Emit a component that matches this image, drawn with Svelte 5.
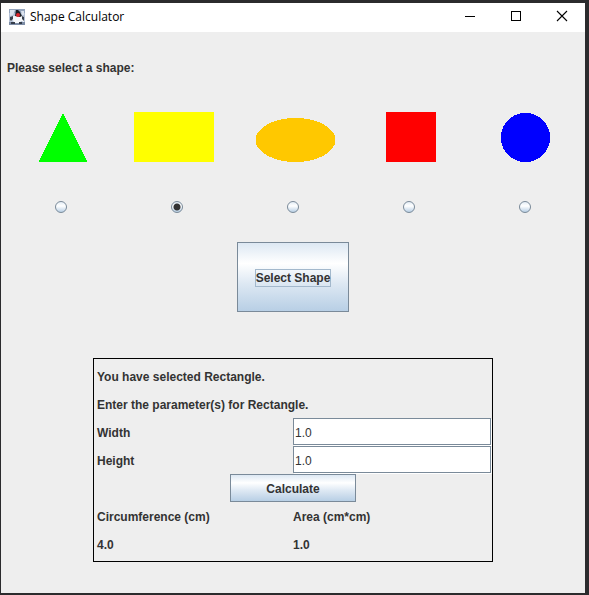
<script>
  const shapes = ['Triangle', 'Rectangle', 'Ellipse', 'Square', 'Circle'];
  let selected = $state('Rectangle');
  let width = $state('1.0');
  let height = $state('1.0');
  let result = $state({ circumference: '4.0', area: '1.0' });

  const format = (n) => (Number.isInteger(n) ? n.toFixed(1) : String(n));

  function calculate(event) {
    event.preventDefault();
    const w = parseFloat(width);
    const h = parseFloat(height);
    result = { circumference: format(2 * (w + h)), area: format(w * h) };
  }
</script>

<div class="desktop">
  <div class="window">
    <header>
      <svg class="logo" width="16" height="16" viewBox="0 0 16 16" aria-hidden="true">
        <rect width="16" height="16" fill="#b4c1d6" />
        <path d="M0 0h16v4H0z" fill="#93a4bd" />
        <path d="M1 1h5L4 6l-3 1zM12 2h3v4h-2z" fill="#dbe3ee" />
        <path d="M0 13h16v3H0z" fill="#7c8ca5" />
        <path d="M1 8l4-1 7-1 3 2v5l-3-1-1 2H5l-1-3-3 1z" fill="#f6f8fb" />
        <path d="M1 8l3-1v3l-2 2-1-1zM13 7l2 1v4l-2-2z" fill="#39414e" />
        <path d="M7 1h2l2 2 2 4-2 1-5-1z" fill="#1b1e25" />
        <circle cx="9" cy="6" r="2" fill="#e0262d" />
        <path d="M2 13h4v2H2zM10 13h3v2h-3z" fill="#343c49" />
      </svg>
      <span class="title">Shape Calculator</span>
      <button class="control" aria-label="Minimize">
        <svg width="46" height="29" shape-rendering="crispEdges"><path d="M18 13.5h10" stroke="#000" /></svg>
      </button>
      <button class="control" aria-label="Maximize">
        <svg width="46" height="29" shape-rendering="crispEdges"><rect x="18.5" y="8.5" width="9" height="9" fill="none" stroke="#000" /></svg>
      </button>
      <button class="control" aria-label="Close">
        <svg width="46" height="29"><path d="M18 8l10 10M28 8L18 18" stroke="#000" stroke-width="1.1" /></svg>
      </button>
    </header>

    <main>
      <h1>Please select a shape:</h1>

      <div class="shapes" role="radiogroup" aria-label="Shape">
        {#each shapes as shape}
          <label>
            <svg width="116" height="50" shape-rendering="crispEdges" aria-hidden="true">
              {#if shape === 'Triangle'}
                <path d="M60 0.5L84.5 50H35.5z" fill="#0f0" />
              {:else if shape === 'Rectangle'}
                <rect x="15" width="80" height="50" fill="#ff0" />
              {:else if shape === 'Ellipse'}
                <ellipse cx="60.5" cy="28" rx="40" ry="22" fill="#ffc800" />
              {:else if shape === 'Square'}
                <rect x="35" width="50" height="50" fill="#f00" />
              {:else}
                <circle cx="58.5" cy="25.5" r="24.7" fill="#00f" />
              {/if}
            </svg>
            <input type="radio" name="shape" value={shape} aria-label={shape} bind:group={selected} />
          </label>
        {/each}
      </div>

      <button class="metal select"><span>Select Shape</span></button>

      <form class="panel" onsubmit={calculate}>
        <p class="wide">You have selected Rectangle.</p>
        <p class="wide">Enter the parameter(s) for Rectangle.</p>
        <label class="name" for="width">Width</label>
        <input id="width" type="text" bind:value={width} />
        <label class="name" for="height">Height</label>
        <input id="height" type="text" bind:value={height} />
        <button class="metal calculate" type="submit">Calculate</button>
        <p class="name">Circumference (cm)</p>
        <p>Area (cm*cm)</p>
        <p class="name">{result.circumference}</p>
        <p>{result.area}</p>
      </form>
    </main>
  </div>
</div>

<style>
  :global(body) {
    margin: 0;
    background: #2b2b2d;
  }
  .desktop {
    box-sizing: border-box;
    display: flex;
    min-height: 100vh;
    padding: 3px 4px 2px 1px;
    background: #2b2b2d;
  }
  .window {
    flex: 1;
    background: #eee;
    color: #333;
    font: bold 12px/16px "Liberation Sans", Arial, sans-serif;
  }
  header {
    display: flex;
    align-items: center;
    height: 29px;
    padding-left: 8px;
    background: #fff;
  }
  .logo {
    margin-right: 5px;
    margin-bottom: 2px;
  }
  .title {
    flex: 1;
    padding-bottom: 2px;
    color: #000;
    font: 12px/16px "Open Sans", "Noto Sans", sans-serif;
  }
  .control {
    padding: 0;
    border: 0;
    background: none;
  }
  .control svg {
    display: block;
  }
  main {
    display: flex;
    flex-direction: column;
    align-items: center;
    padding: 28px 2px 31px;
  }
  h1 {
    align-self: stretch;
    margin: 0;
    padding-left: 4px;
    font: inherit;
  }
  .shapes {
    display: flex;
    align-self: stretch;
    justify-content: space-around;
    margin-top: 36px;
  }
  .shapes label {
    display: flex;
    flex-direction: column;
    align-items: center;
    gap: 39px;
  }
  .shapes input {
    appearance: none;
    box-sizing: border-box;
    width: 12px;
    height: 12px;
    margin: 0;
    border: 1px solid #7a8a99;
    border-radius: 50%;
    background: linear-gradient(#e4edf6, #fff 40%, #b8cfe5);
  }
  .shapes input:checked {
    background:
      radial-gradient(circle, #333 3px, transparent 4px),
      linear-gradient(#dde8f3, #fff 40%, #b8cfe5);
  }
  .metal {
    padding: 2px 0 0;
    border: 1px solid #7a8a99;
    background: linear-gradient(#dde8f3, #fff 30%, #dde8f3 60%, #b8cfe5);
    color: #333;
    font: inherit;
  }
  .select {
    width: 112px;
    height: 70px;
    margin: 29px 0 46px;
  }
  .select span {
    display: inline-block;
    border: 1px solid #a3b8cc;
  }
  .panel {
    box-sizing: border-box;
    display: grid;
    grid-template-columns: 1fr 1fr;
    grid-auto-rows: 28px;
    align-items: center;
    width: 100%;
    max-width: 400px;
    padding: 3px 0;
    border: 1px solid #000;
  }
  .panel p,
  .panel label {
    margin: 0;
    padding-top: 2px;
  }
  .name,
  .wide {
    padding-left: 3px;
  }
  .wide,
  .calculate {
    grid-column: 1 / -1;
  }
  .panel input {
    box-sizing: border-box;
    width: auto;
    min-width: 0;
    height: 27px;
    margin: 0 1px 1px 0;
    padding: 2px 1px 0;
    border: 1px solid #7a8a99;
    border-radius: 0;
    background: #fff;
    box-shadow: 1px 1px 0 #fff;
    color: #333;
    font: 12px/16px "Liberation Sans", Arial, sans-serif;
  }
  .calculate {
    justify-self: center;
    width: 126px;
    height: 28px;
  }
</style>
